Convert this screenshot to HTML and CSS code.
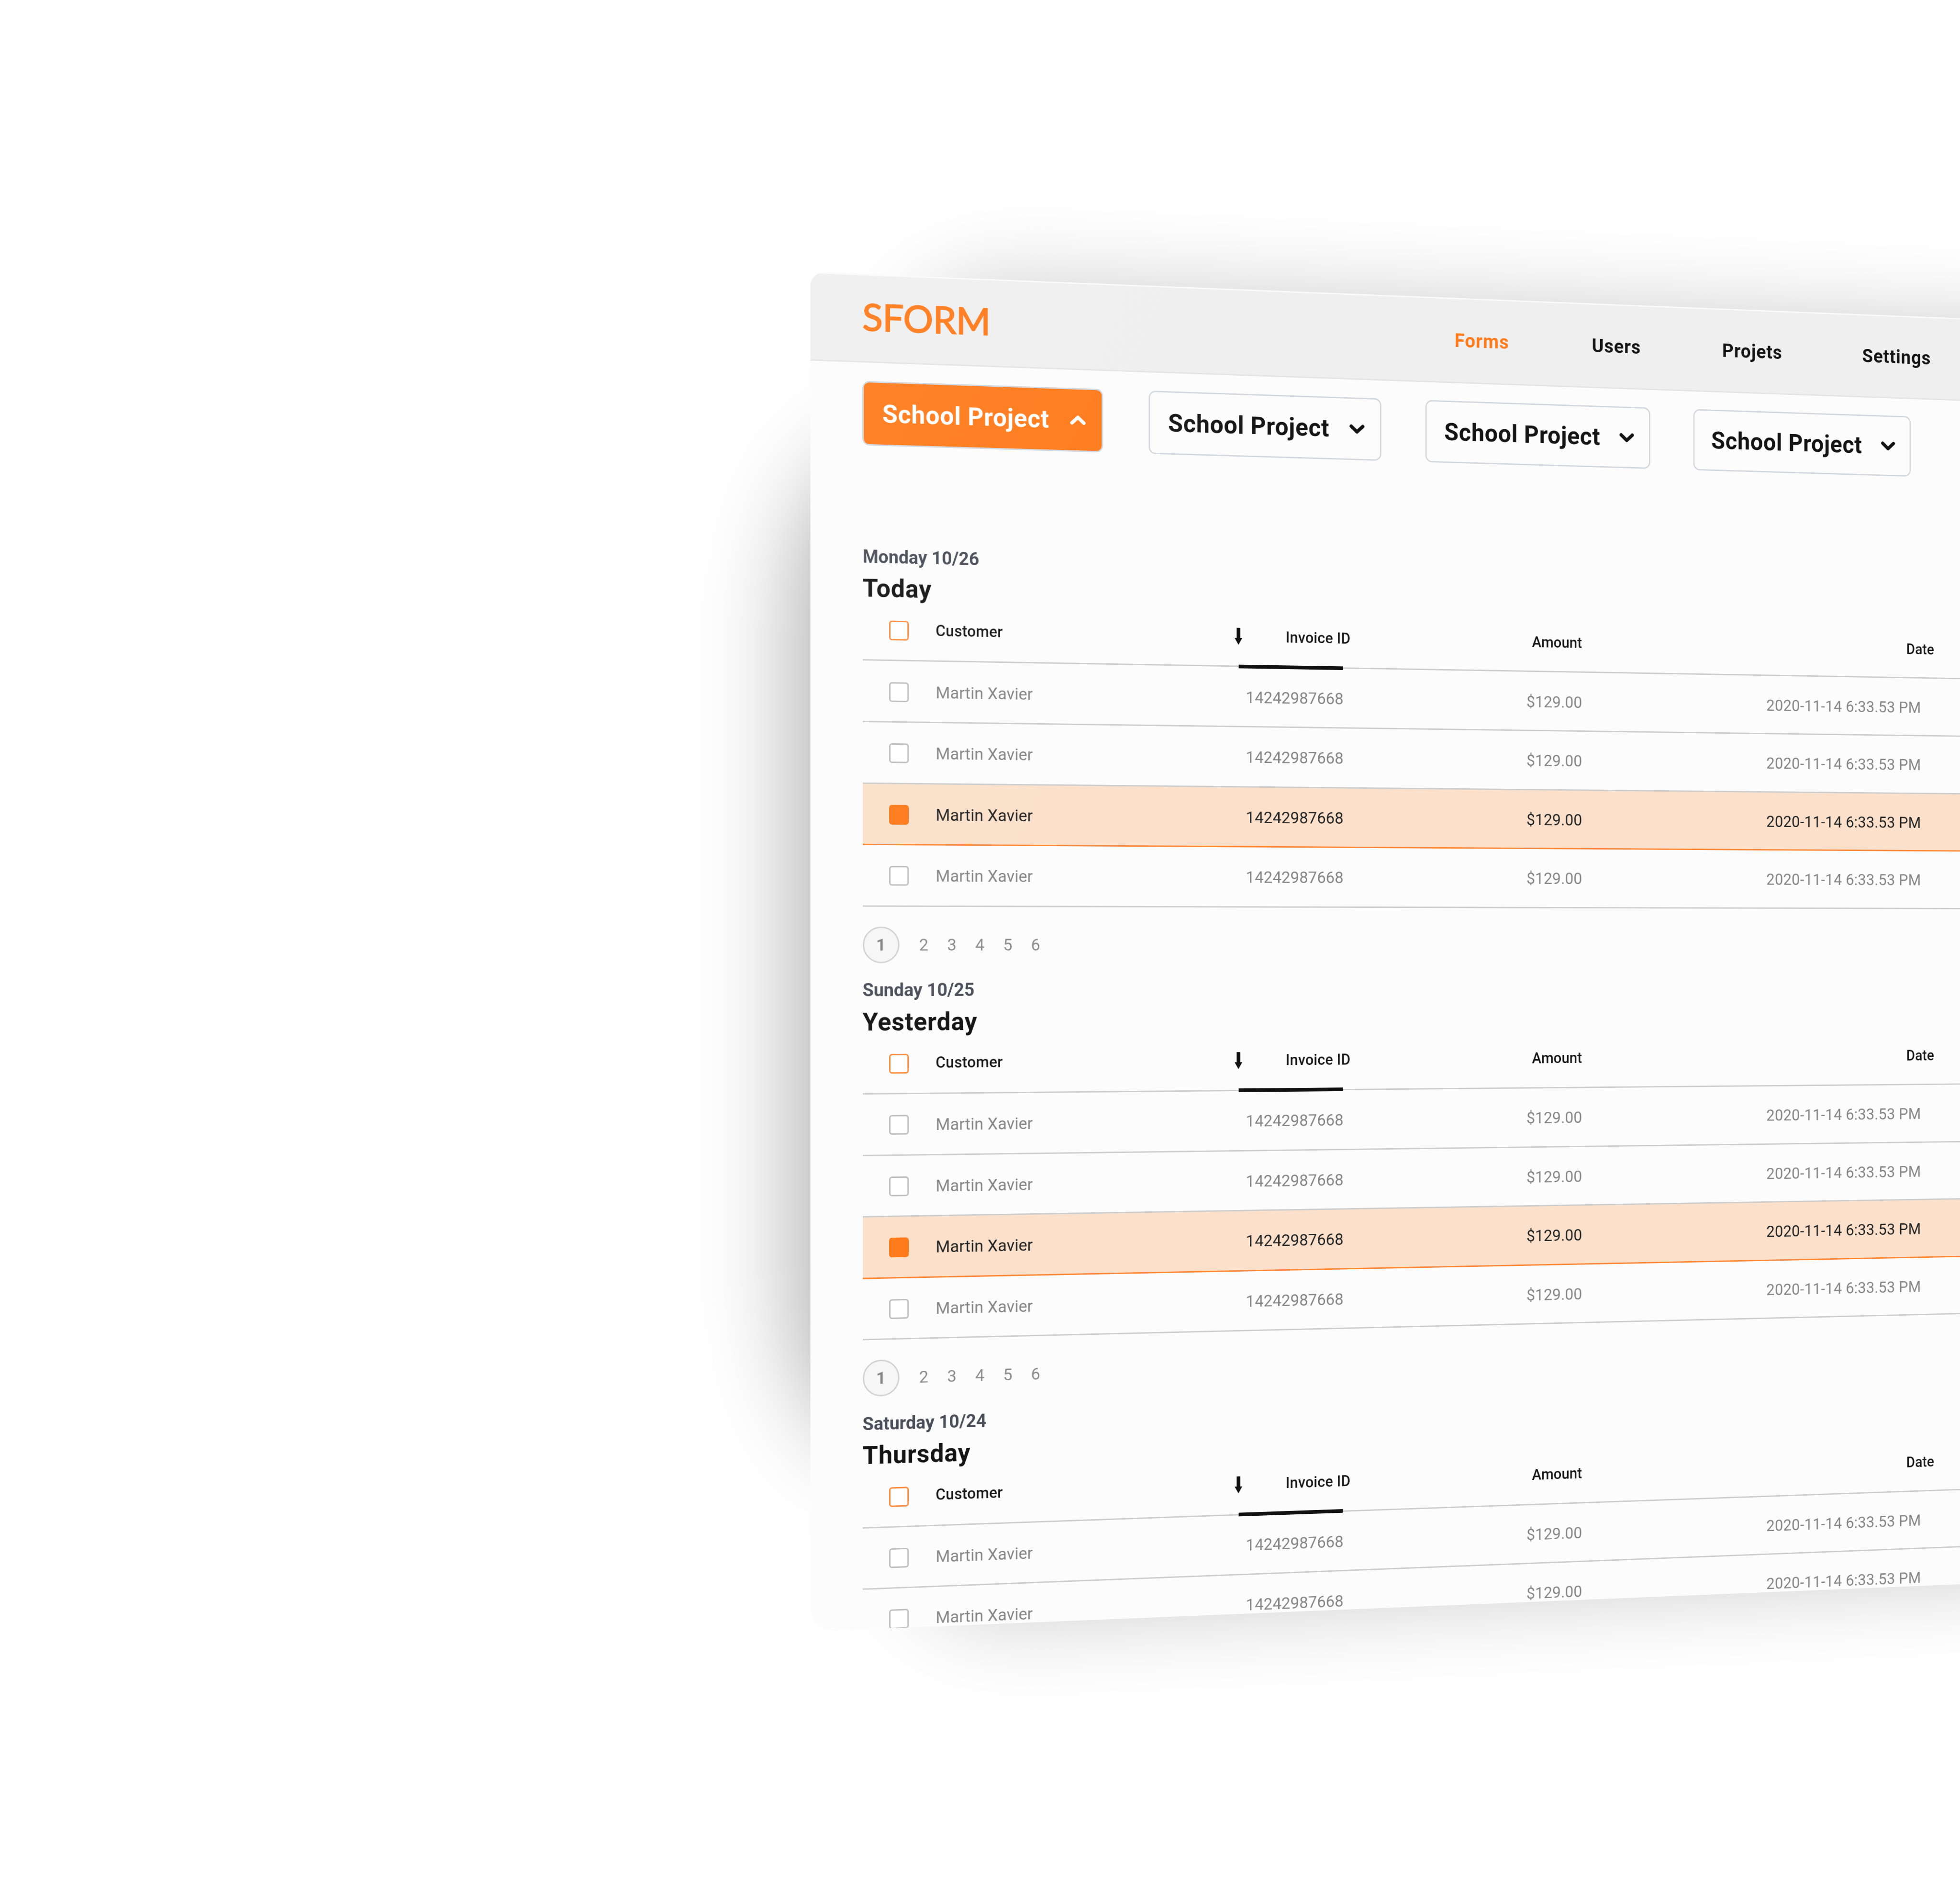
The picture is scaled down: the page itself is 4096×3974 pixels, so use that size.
FILE: index.html
```
<!DOCTYPE html>
<html lang="en">
<head>
<meta charset="utf-8">
<title>SFORM</title>
<link rel="stylesheet" href="styles.css">
</head>
<body>
<div class="scene">
<div class="device">
<div class="shadow shadow-block"></div>
<div class="shadow shadow-side"></div>
<main class="panel">
<header class="topbar">
<div class="logo">SFORM</div>
<nav class="nav"><a class="active">Forms</a><a>Users</a><a>Projets</a><a>Settings</a></nav>
</header>
<div class="projects" id="projects"></div>
<div id="sections"></div>
<div class="sheen"></div>
</main>
</div>
</div>
<script src="app.js"></script>
</body>
</html>
```
FILE: styles.css
```
* { box-sizing: border-box; }
body { margin: 0; background: #fff; overflow: hidden; font-family: Roboto, "Liberation Sans", sans-serif; color: #141414; }

.scene { width: 4164px; height: 4040px; overflow: hidden; transform: scale(.98367); transform-origin: 0 0; display: flow-root; }

/* The board recedes to the right; its vanishing line sits at mid-height. */
.device {
  position: relative;
  width: 3200px;
  height: 2878.5px;
  margin: 581.6px 0 0 1722.4px;
  transform-origin: 110.6px 1423.4px;
  transform: matrix3d(1,0,0,0.00002825, 0,1,0,0, 0,0,1,0, 0,0,0,1);
}
.shadow { position: absolute; }
.shadow-block { left: 200px; top: 6px; right: 0; bottom: 6px; border-radius: 220px; background: rgba(0,0,0,.2); filter: blur(92px); }
.shadow-side { left: -35px; top: 370px; width: 900px; bottom: 375px; border-radius: 200px / 350px; background: rgba(0,0,0,.3); filter: blur(99px); }

.panel { position: relative; height: 100%; overflow: hidden; border-radius: 30px 0 0 50px; background: #fcfcfc; }
.sheen { position: absolute; inset: 0; background: linear-gradient(115deg, rgba(255,255,255,.08), rgba(255,255,255,0) 28%); pointer-events: none; }

.topbar { display: flex; align-items: center; height: 187.5px; padding-left: 110px; background: #efefef; border-top: 3px solid #fafafa; border-bottom: 3px solid #e4e4e4; }
.logo { flex: 0 0 1304.5px; font: 400 80px/96px Lato, sans-serif; color: #ff7a1a; -webkit-text-stroke: 2px #ff7a1a; margin-top: -10px; letter-spacing: -.5px; }
.nav { display: flex; gap: 191px; font-size: 42px; font-weight: 700; line-height: 48px; letter-spacing: 1.1px; }
.nav .active { color: #ff7a1a; }

.projects { display: flex; gap: 100.3px; padding: 39.5px 0 0 109.9px; height: 388.4px; }
.project { display: flex; align-items: center; justify-content: space-between; width: 519px; height: 137px; padding: 0 34px 0 39.5px; border: 3px solid #d2d8de; border-radius: 15px; font-size: 53.1px; font-weight: 700; line-height: 64px; letter-spacing: .8px; white-space: nowrap; }
.project.open { background: #ff7a1a; color: #fff; }
.chevron { width: 36px; height: 24px; fill: none; stroke: currentColor; stroke-width: 7.500; stroke-linecap: round; stroke-linejoin: round; }

.section { height: 921.6px; padding-left: 110.6px; }
.day { height: 48px; font-size: 38.3px; font-weight: 700; line-height: 48px; color: #4b4c57; }
.title { margin: 11.4px 0 0; height: 64px; font-size: 53.1px; font-weight: 700; line-height: 64px; letter-spacing: .9px; }

.row { display: grid; grid-template-columns: 156px 661px 235px 545.5px 803.5px 1fr; align-items: center; height: 130.55px; padding-top: 3px; border-bottom: 3px solid #cdcdcd; font-size: 35.4px; line-height: 44px; color: #858585; white-space: nowrap; }
.row .num { text-align: right; }
.row .date { letter-spacing: .2px; }
.row.selected { background: #fbe1cb; border-bottom-color: #ff8634; color: #222; }
.row.head { position: relative; height: 122.2px; padding: 0 0 5px; font-size: 32.4px; font-weight: 500; color: #161616; letter-spacing: .35px; }
.check { width: 42px; height: 42px; margin-left: 56px; border: 3px solid #bdbdbd; border-radius: 6px; background: #fff; }
.head .check { border-color: #ff8c3d; }
.selected .check { border-color: #ff7a1a; background: #ff7a1a; }
.head .label { padding-bottom: 3px; }
.head .num { letter-spacing: .2px; }
.sort { display: flex; align-items: center; justify-content: space-between; margin: 0 -16px 0 -8.5px; }
.arrow { width: 17px; height: 37px; fill: #111; }
.head .date { margin-right: -32px; }
.sorted { position: absolute; left: 817px; bottom: -5.3px; width: 233px; height: 8px; background: #111; }

.pager { display: flex; align-items: center; gap: 40.4px; height: 77.5px; margin-top: 42.3px; margin-bottom: 34px; font-size: 35.4px; color: #8a8a8a; }
.current { display: grid; place-items: center; width: 78px; height: 78px; margin-right: 2px; border: 3px solid #d2d2d2; border-radius: 50%; background: #f6f6f6; font-weight: 700; color: #858585; }
```
FILE: app.js
```
const chevron = open => `<svg class="chevron" viewBox="0 0 36 24"><path d="${open ? 'M5 18 L18 6 L31 18' : 'M5 6 L18 18 L31 6'}"/></svg>`;
document.getElementById('projects').innerHTML = [true, false, false, false]
  .map(open => `<div class="project${open ? ' open' : ''}"><span>School Project</span>${chevron(open)}</div>`).join('');

const head = `<div class="row head">
<div class="check"></div><div class="label">Customer</div>
<div class="sort label"><svg class="arrow" viewBox="0 0 17 37"><path d="M4.5 0h8v22H17L8.500 37 0 22h4.500z"/></svg><span>Invoice ID</span></div>
<div class="num label">Amount</div><div class="num label date">Date</div><div></div><i class="sorted"></i></div>`;
const row = selected => `<div class="row${selected ? ' selected' : ''}">
<div class="check"></div><div>Martin Xavier</div><div class="num">14242987668</div>
<div class="num">$129.00</div><div class="num date">2020-11-14 6:33.53 PM</div><div></div></div>`;
const pager = `<div class="pager"><span class="current">1</span>${[2, 3, 4, 5, 6].map(n => `<span>${n}</span>`).join('')}</div>`;
const section = (day, title, rows, paged) => `<section class="section"><div class="day">${day}</div><h2 class="title">${title}</h2>
${head}${rows.map(row).join('')}${paged ? pager : ''}</section>`;

document.getElementById('sections').innerHTML =
  section('Monday 10/26', 'Today', [false, false, true, false], true) +
  section('Sunday 10/25', 'Yesterday', [false, false, true, false], true) +
  section('Saturday 10/24', 'Thursday', [false, false], false);
```
